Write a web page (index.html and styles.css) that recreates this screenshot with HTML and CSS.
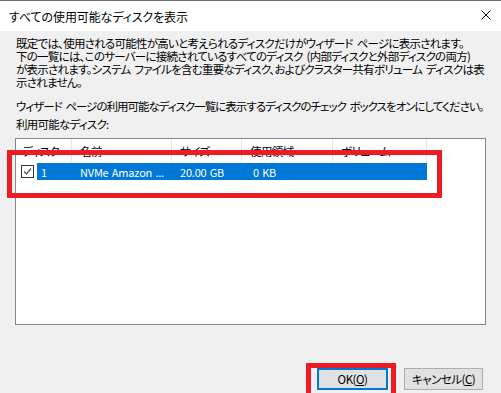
FILE: index.html
```html
<!DOCTYPE html>
<html lang="ja">
<head>
<meta charset="utf-8">
<title>すべての使用可能なディスクを表示</title>
<link rel="stylesheet" href="styles.css">
</head>
<body>
<div class="dialog">
  <div class="titlebar">
    <span class="title">すべての使用可能なディスクを表示</span>
    <svg class="close" viewBox="0 0 10 10" width="10" height="10"><path d="M0.5 0.5 L9.5 9.5 M9.5 0.5 L0.5 9.5" stroke="#000" stroke-width="1" fill="none"/></svg>
  </div>
  <div class="content">
    <p class="desc">既定では、使用される可能性が高いと考えられるディスクだけがウィザード ページに表示されます。<br>下の一覧には、このサーバーに接続されているすべてのディスク (内部ディスクと外部ディスクの両方)<br>が表示されます。システム ファイルを含む重要なディスク、およびクラスター共有ボリューム ディスクは表<br>示されません。</p>
    <p class="instr">ウィザード ページの利用可能なディスク一覧に表示するディスクのチェック ボックスをオンにしてください。</p>
    <p class="label">利用可能なディスク:</p>
    <div class="list">
      <div class="list-head">
        <div class="hcell first">ディスク</div>
        <div class="hcell">名前</div>
        <div class="hcell">サイズ</div>
        <div class="hcell">使用領域</div>
        <div class="hcell">ボリューム</div>
      </div>
      <div class="list-row">
        <span class="check"><svg viewBox="0 0 11 11" width="11" height="11"><path d="M2 5.5 L4.5 8 L9 2.5" stroke="#555" stroke-width="1.2" fill="none"/></svg></span>
        <div class="selected">
          <div class="cell first">1</div>
          <div class="cell">NVMe Amazon ...</div>
          <div class="cell">20.00 GB</div>
          <div class="cell used">0 KB</div>
          <div class="cell"></div>
        </div>
      </div>
    </div>
    <div class="buttons">
      <button class="btn default">OK(<u>O</u>)</button>
      <button class="btn">キャンセル(<u>C</u>)</button>
    </div>
  </div>
  <div class="mark mark-row"></div>
  <div class="mark mark-ok"></div>
</div>
</body>
</html>
```
FILE: styles.css
```css
* { box-sizing: border-box; margin: 0; padding: 0; }
html, body { width: 501px; height: 393px; overflow: hidden; }
body {
  font-family: "Noto Sans CJK JP", "Noto Sans", sans-serif;
  background: #f0f0f0;
  color: #000;
}
.dialog {
  position: relative;
  width: 501px;
  height: 393px;
  border-top: 1px solid #6e6e6e;
  display: flex;
  flex-direction: column;
}
.titlebar {
  flex: none;
  height: 30px;
  background: #fff;
  display: flex;
  align-items: center;
  justify-content: space-between;
  padding: 0 10px 0 9px;
}
.title {
  font-size: 12px;
  font-feature-settings: "palt";
  letter-spacing: -0.1px;
}
.close { display: block; margin-top: -2px; }
.content {
  flex: 1;
  display: flex;
  flex-direction: column;
  padding: 6px 0 3px 15px;
}
.desc, .instr, .label {
  font-size: 11.5px;
  line-height: 13px;
  font-feature-settings: "palt";
  letter-spacing: -0.75px;
  word-spacing: 2px;
  white-space: nowrap;
  padding-left: 1px;
}
.instr { margin-top: 11px; letter-spacing: -1px; }
.label { margin-top: 5px; }
.list {
  margin-top: 7px;
  width: 471px;
  height: 187px;
  border: 1px solid #828790;
  background: #fff;
  font-size: 11.5px;
  font-feature-settings: "palt";
}
.list-head {
  display: grid;
  grid-template-columns: 56px 100px 70px 91px 94px;
  height: 24px;
}
.hcell {
  display: flex;
  align-items: center;
  padding-left: 8px;
  border-right: 1px solid #e5e5e5;
  white-space: nowrap;
  letter-spacing: -0.6px;
}
.hcell.first { padding-left: 6px; }
.list-row {
  display: flex;
  align-items: center;
  height: 17px;
}
.check {
  width: 13px;
  height: 13px;
  margin-left: 5px;
  border: 1px solid #333;
  background: #fff;
  display: flex;
  align-items: center;
  justify-content: center;
}
.check svg { display: block; }
.selected {
  margin-left: 3px;
  width: 390px;
  height: 17px;
  background: #0078d7;
  color: #fff;
  display: grid;
  grid-template-columns: 35px 100px 70px 91px 94px;
  align-items: center;
}
.cell { padding-left: 8px; white-space: nowrap; font-size: 11px; letter-spacing: -0.2px; word-spacing: 1px; }
.cell.first { padding-left: 4px; }
.cell.used { padding-left: 11px; }
.buttons {
  margin-top: auto;
  display: flex;
  justify-content: flex-end;
  gap: 16px;
  padding-right: 18px;
}
.btn {
  height: 22px;
  font-family: "Noto Sans CJK JP", "Noto Sans", sans-serif;
  font-size: 11.5px;
  font-feature-settings: "palt";
  letter-spacing: -0.5px;
  background: #e1e1e1;
  border: 1px solid #adadad;
  color: #000;
  display: flex;
  align-items: center;
  justify-content: center;
}
.btn u { text-underline-offset: 1px; }
.btn.default { width: 71px; border: 2px solid #0078d7; }
.btn:not(.default) { width: 79px; }
.mark {
  position: absolute;
  border: 5px solid #ed1c24;
}
.mark-row { left: 7px; top: 149px; width: 435px; height: 48px; }
.mark-ok { left: 306px; top: 362px; width: 90px; height: 40px; }
```
